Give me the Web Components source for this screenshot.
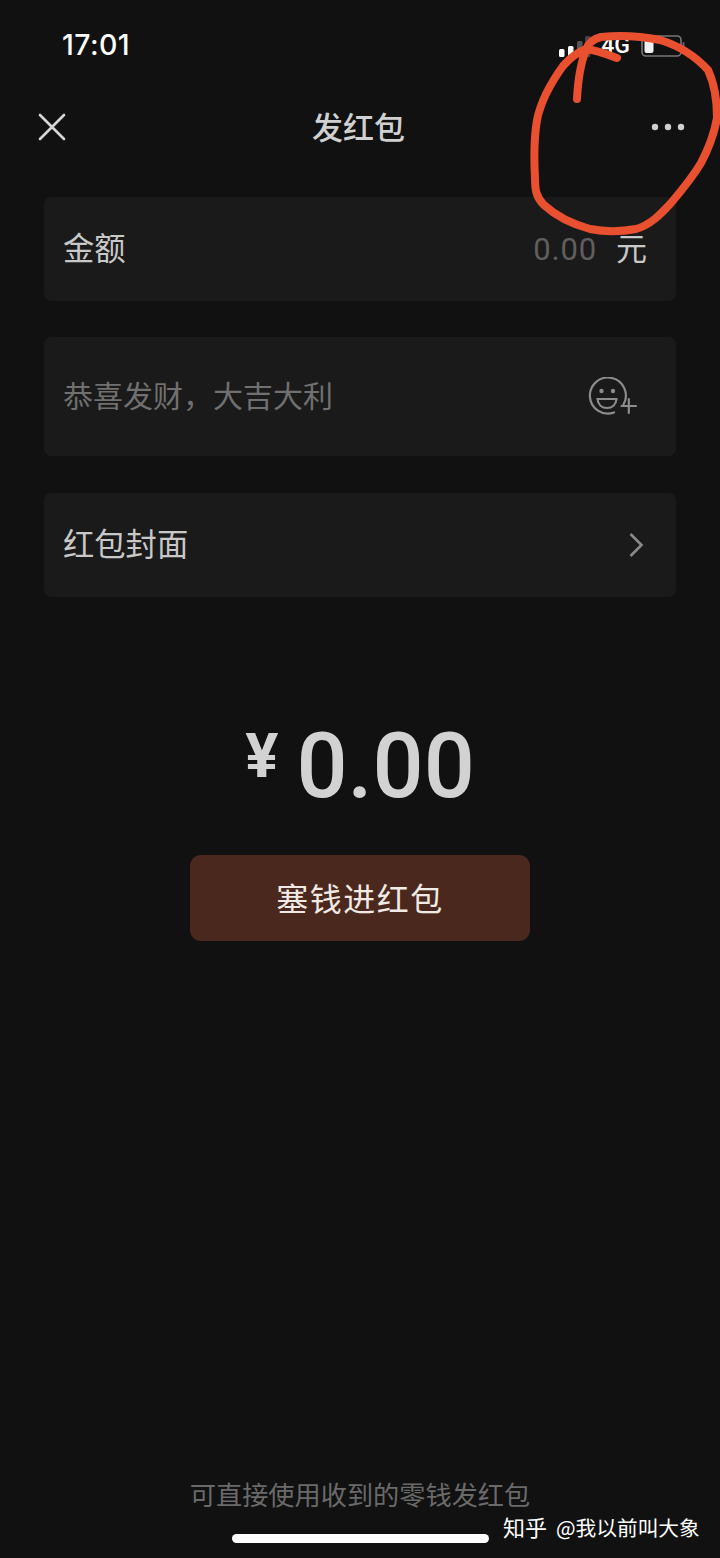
<!DOCTYPE html>
<html lang="zh">
<head>
<meta charset="utf-8">
<title>发红包</title>
<style>
  html, body { margin: 0; background: #111111; }
  body { font-family: "Noto Sans CJK SC", "Noto Sans", sans-serif; }
</style>
</head>
<body>
<red-packet-page>
  <status-bar slot="top" time="17:01"></status-bar>
  <nav-bar slot="top">发红包</nav-bar>

  <form-card style="--h:104px;--gap:0px">
    金额
    <span slot="end" style="color:#5f5f5f;font-family:Roboto,sans-serif;font-size:31px;letter-spacing:.8px;padding-top:5px;margin-right:-1px">0.00</span>
    <span slot="end" style="color:#c8c8c8">元</span>
  </form-card>
  <form-card style="--h:119px;--label:#707070;--size:30px;--gap:36px">
    恭喜发财，大吉大利
    <svg slot="end" width="50" height="40" viewBox="0 0 50 40" fill="none" stroke="#8c8c8c" stroke-width="2.2" stroke-linecap="round" style="margin-right:10px">
      <path d="M36.5 27.5A18 18 0 1 0 27 35.5"/>
      <circle cx="14.5" cy="14" r="2.2" fill="#8c8c8c" stroke="none"/>
      <circle cx="26" cy="14" r="2.2" fill="#8c8c8c" stroke="none"/>
      <path d="M10.5 22H29.5C29 28 25 31 20 31S11 28 10.5 22Z"/>
      <path d="M34.5 29H49M41.8 22V36"/>
    </svg>
  </form-card>
  <form-card style="--h:104px;--gap:37px">
    红包封面
    <svg slot="end" width="16" height="26" viewBox="0 0 16 26" fill="none" stroke="#8a8a8a" stroke-width="2.6" style="margin-right:3px">
      <path d="M2.5 2 13.5 13 2.5 24"/>
    </svg>
  </form-card>

  <money-total>0.00</money-total>
  <send-button>塞钱进红包</send-button>
  <page-foot>可直接使用收到的零钱发红包</page-foot>
  <home-bar></home-bar>

  <scribble-mark slot="over"></scribble-mark>
  <zhihu-mark slot="over"><span style="font-size:22px;margin-right:9px">知乎</span>@我以前叫大象</zhihu-mark>
</red-packet-page>

<script>
class RedPacketPage extends HTMLElement {
  constructor() {
    super();
    this.attachShadow({ mode: "open" }).innerHTML = `
      <style>
        :host { display: flex; flex-direction: column; position: relative; width: 720px; height: 1558px; overflow: hidden; background: #111111; }
        main { flex: 1; display: flex; flex-direction: column; padding: 0 44px; }
      </style>
      <slot name="top"></slot>
      <main><slot></slot></main>
      <slot name="over"></slot>`;
  }
}

class StatusBar extends HTMLElement {
  constructor() {
    super();
    this.attachShadow({ mode: "open" }).innerHTML = `
      <style>
        :host { display: flex; align-items: center; justify-content: space-between; height: 91px; box-sizing: border-box; padding: 0 35px 0 62px; color: #fff; }
        .time { font: 500 28.5px/1 Inter, Roboto, sans-serif; letter-spacing: .4px; }
        .right { display: flex; align-items: center; gap: 3px; }
        .net { font: 500 23px/1 Roboto, sans-serif; margin-left: 1px; }
        .bat { margin-left: 8px; }
      </style>
      <span class="time">${this.getAttribute("time")}</span>
      <span class="right">
        <svg width="38" height="22" viewBox="0 0 38 22">
          <rect x="0" y="14" width="5.5" height="8" rx="1.5" fill="#fff"/>
          <rect x="9" y="11" width="5.5" height="11" rx="1.5" fill="#fff"/>
          <rect x="18" y="6" width="5.5" height="16" rx="1.5" fill="#555"/>
          <rect x="26" y="1" width="5.5" height="21" rx="1.5" fill="#444"/>
        </svg>
        <span class="net">4G</span>
        <svg class="bat" width="44" height="24" viewBox="0 0 44 24" fill="none">
          <rect x="1" y="2" width="39" height="20" rx="4" stroke="#777" stroke-width="1.6"/>
          <rect x="3.5" y="5" width="9" height="14" rx="2" fill="#f0f0f0"/>
          <path d="M42.5 9v6" stroke="#666" stroke-width="2" stroke-linecap="round"/>
        </svg>
      </span>`;
  }
}

class NavBar extends HTMLElement {
  constructor() {
    super();
    this.attachShadow({ mode: "open" }).innerHTML = `
      <style>
        :host { display: flex; align-items: center; justify-content: space-between; height: 72px; padding: 0 35px 0 38px; margin-bottom: 34px; position: relative; }
        .title { position: absolute; left: 0; right: 0; top: -1px; text-align: center; color: #d0d0d0; font-size: 31px; line-height: 72px; font-weight: 500; padding-right: 3px; }
        svg { display: block; }
      </style>
      <svg width="28" height="28" viewBox="0 0 28 28" stroke="#d6d6d6" stroke-width="2.6" stroke-linecap="round"><path d="M2 2 26 26M26 2 2 26"/></svg>
      <div class="title"><slot></slot></div>
      <svg width="34" height="8" viewBox="0 0 34 8" fill="#cfcfcf"><circle cx="4" cy="4" r="3.2"/><circle cx="17" cy="4" r="3.2"/><circle cx="30" cy="4" r="3.2"/></svg>`;
  }
}

class FormCard extends HTMLElement {
  constructor() {
    super();
    this.attachShadow({ mode: "open" }).innerHTML = `
      <style>
        :host { display: flex; align-items: center; justify-content: space-between; height: var(--h); margin-top: var(--gap); padding: 0 29px 0 20px; background: #1a1a1a; border-radius: 7px; color: var(--label, #c8c8c8); font-size: var(--size, 31.3px); }
        .label { padding-bottom: 5px; margin-left: -1px; }
        .end { display: flex; align-items: center; gap: 20px; font-size: 31px; padding-bottom: 5px; }
        ::slotted(svg) { position: relative; top: 2.5px; }
      </style>
      <span class="label"><slot></slot></span>
      <span class="end"><slot name="end"></slot></span>`;
  }
}

class MoneyTotal extends HTMLElement {
  constructor() {
    super();
    this.attachShadow({ mode: "open" }).innerHTML = `
      <style>
        :host { display: flex; justify-content: center; align-items: flex-start; margin-top: 122px; height: 96px; color: #d2d2d2; }
        .yen { font: 700 62px/1 Roboto, sans-serif; margin: 6px 18px 0 0; }
        .num { font: 500 90px/96px Roboto, sans-serif; }
      </style>
      <span class="yen">¥</span>
      <span class="num"><slot></slot></span>`;
  }
}

class SendButton extends HTMLElement {
  constructor() {
    super();
    this.attachShadow({ mode: "open" }).innerHTML = `
      <style>
        :host { display: flex; align-items: center; justify-content: center; align-self: center; width: 340px; height: 86px; margin-top: 40px; background: #4a281e; border-radius: 11px; color: #f0e9e4; font-size: 32px; letter-spacing: 1.5px; padding-bottom: 2px; box-sizing: border-box; }
      </style>
      <slot></slot>`;
  }
}

class PageFoot extends HTMLElement {
  constructor() {
    super();
    this.attachShadow({ mode: "open" }).innerHTML = `
      <style>
        :host { display: block; margin-top: auto; text-align: center; color: #6a6a6a; font-size: 26.2px; line-height: 36px; }
      </style>
      <slot></slot>`;
  }
}

class HomeBar extends HTMLElement {
  constructor() {
    super();
    this.attachShadow({ mode: "open" }).innerHTML = `
      <style>
        :host { display: block; align-self: center; width: 257px; height: 9px; margin: 22px 0 15px; background: #fff; border-radius: 5px; }
      </style>`;
  }
}

class ScribbleMark extends HTMLElement {
  constructor() {
    super();
    this.attachShadow({ mode: "open" }).innerHTML = `
      <style>
        :host { position: absolute; left: 0; top: 0; width: 720px; height: 300px; pointer-events: none; }
        svg { display: block; }
      </style>
      <svg width="720" height="300" viewBox="0 0 720 300" fill="none" stroke="#e8502f" stroke-width="8" stroke-linecap="round" stroke-linejoin="round">
        <path d="M577 99C578 80 581 62 586 50C588 44 592 39 601 37C620 35 640 36 660 40C680 46 697 58 708 70C715 85 717 100 717 118C714 135 709 148 701 163C692 178 682 190 671 203C660 215 650 225 636 229C620 232 605 232 590 229C572 224 556 216 544 205C536 197 535 190 535 178C534 160 534 138 537 120C541 100 550 84 563 66C570 58 578 52 586 49C596 50 606 54 617 58"/>
      </svg>`;
  }
}

class ZhihuMark extends HTMLElement {
  constructor() {
    super();
    this.attachShadow({ mode: "open" }).innerHTML = `
      <style>
        :host { position: absolute; left: 503px; top: 1509px; color: #fff; font-size: 20.7px; line-height: 34px; white-space: nowrap; }
      </style>
      <slot></slot>`;
  }
}

customElements.define("red-packet-page", RedPacketPage);
customElements.define("status-bar", StatusBar);
customElements.define("nav-bar", NavBar);
customElements.define("form-card", FormCard);
customElements.define("money-total", MoneyTotal);
customElements.define("send-button", SendButton);
customElements.define("page-foot", PageFoot);
customElements.define("home-bar", HomeBar);
customElements.define("scribble-mark", ScribbleMark);
customElements.define("zhihu-mark", ZhihuMark);
</script>
</body>
</html>
